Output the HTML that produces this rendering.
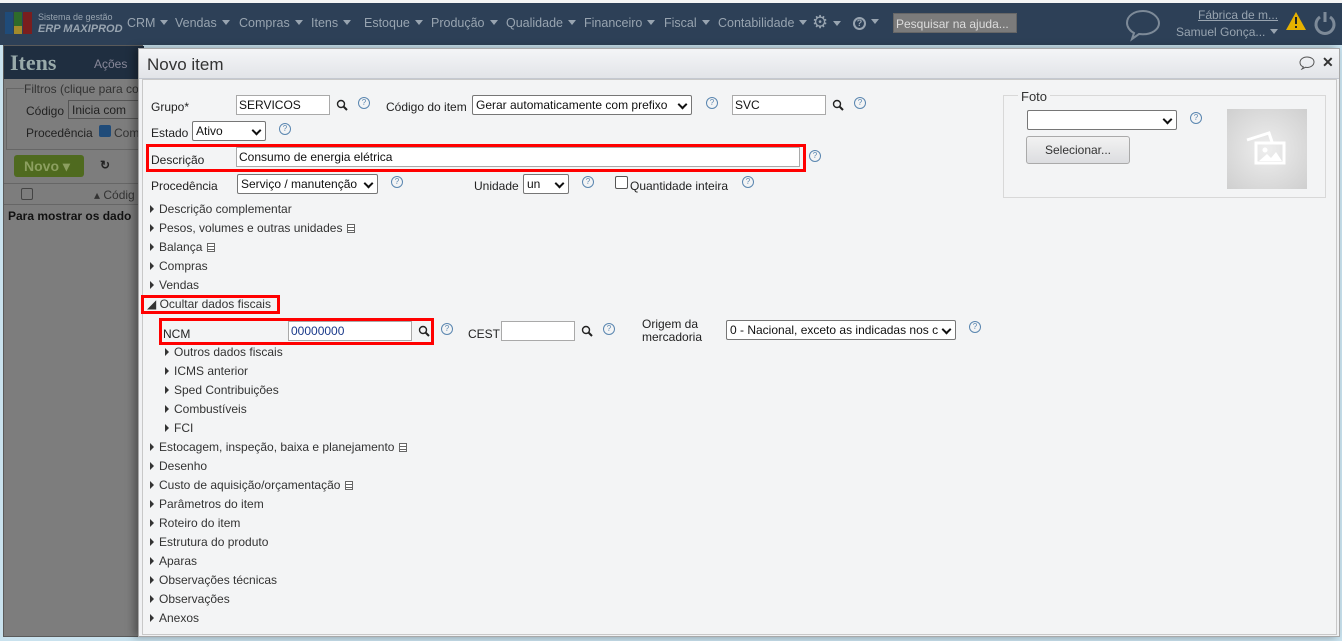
<!DOCTYPE html>
<html><head><meta charset="utf-8">
<style>
*{box-sizing:border-box;margin:0;padding:0}
body{width:1342px;height:641px;overflow:hidden;background:#c9e2ee;font-family:"Liberation Sans",sans-serif;font-size:12px;color:#222;position:relative}
.a{position:absolute;white-space:nowrap}
.nav{position:absolute;left:0;top:3px;width:1342px;height:42px;background:#2d4057}
.nav .m{color:#98a4b0;font-size:12.5px;top:13px}
.tri{display:inline-block;width:0;height:0;border-left:4px solid transparent;border-right:4px solid transparent;border-top:5px solid #98a4b0;margin-left:5px;vertical-align:2px}
.left{position:absolute;left:3px;top:45px;width:140px;height:592px;background:#7d7d7d;border:1px solid #5a5a5a}
.dlg{position:absolute;left:138px;top:48px;width:1202px;height:589px;background:#f0f1f3;border:1px solid #a8a8a8;box-shadow:-4px 0 8px rgba(0,0,0,.35)}
.hdr{position:absolute;left:0;top:0;width:100%;height:30px;background:linear-gradient(#f4f5f7,#e2e4e8);border-bottom:1px solid #c4c8d0}
.body{position:absolute;left:3px;top:30px;width:1195px;height:556px;border:1px solid #c8c8c8;background:#f3f4f5}
.lbl{font-size:12px;color:#222}
.inp{position:absolute;height:20px;background:#fff;border:1px solid #a9a9a9;font-size:12px;padding:2px 2px;color:#111}
.sel{position:absolute;height:20px;background:#fff;border:1px solid #767676;border-radius:2px;font-size:12px;padding:2px 3px;color:#111;overflow:hidden;white-space:nowrap}
.sel:after{content:"";position:absolute;right:5px;top:5px;width:5px;height:5px;border-right:2px solid #111;border-bottom:2px solid #111;transform:rotate(45deg)}
.q{position:absolute;width:12px;height:12px;border:1px solid #5a86b0;border-radius:50%;font-size:8px;color:#5a86b0;text-align:center;line-height:10px}
.red{position:absolute;border:3px solid #f00}
.row{position:absolute;left:7px;color:#333;font-size:12px}
.row:before{content:"";display:inline-block;width:0;height:0;border-top:4px solid transparent;border-bottom:4px solid transparent;border-left:4px solid #333;margin-right:5px;vertical-align:0}
.doc{display:inline-block;width:8px;height:9px;border:1px solid #666;margin-left:5px;vertical-align:-1px;background:linear-gradient(#fff 2px,#666 2px,#666 3px,#fff 3px,#fff 5px,#666 5px,#666 6px,#fff 6px)}
</style></head><body>
<div class="a" style="left:0;top:0;width:1342px;height:3px;background:#f4f4f4"></div>
<div class="nav">
 <div class="a" style="left:5px;top:9px;width:8px;height:22px;background:#1f4b79"></div>
 <div class="a" style="left:14px;top:9px;width:8px;height:14px;background:#2f6b2a"></div>
 <div class="a" style="left:14px;top:23px;width:8px;height:8px;background:#a38a2b"></div>
 <div class="a" style="left:23px;top:9px;width:9px;height:22px;background:#7a1e1e"></div>
 <div class="a" style="left:38px;top:9px;color:#98a4b0;font-size:9px">Sistema de gestão</div>
 <div class="a" style="left:38px;top:20px;color:#98a4b0;font-size:11px;font-weight:bold;font-style:italic">ERP MAXIPROD</div>
 <div class="a m" style="left:127px">CRM<span class="tri"></span></div>
 <div class="a m" style="left:175px">Vendas<span class="tri"></span></div>
 <div class="a m" style="left:239px">Compras<span class="tri"></span></div>
 <div class="a m" style="left:311px">Itens<span class="tri"></span></div>
 <div class="a m" style="left:364px">Estoque<span class="tri"></span></div>
 <div class="a m" style="left:431px">Produção<span class="tri"></span></div>
 <div class="a m" style="left:506px">Qualidade<span class="tri"></span></div>
 <div class="a m" style="left:584px">Financeiro<span class="tri"></span></div>
 <div class="a m" style="left:664px">Fiscal<span class="tri"></span></div>
 <div class="a m" style="left:718px">Contabilidade<span class="tri"></span></div>
 <div class="a m" style="left:812px;top:9px;font-size:18px">⚙<span class="tri"></span></div>
 <div class="a m" style="left:853px;top:12px"><span style="display:inline-block;width:13px;height:13px;border:2px solid #98a4b0;border-radius:50%;font-size:9px;text-align:center;line-height:9px;font-weight:bold">?</span><span class="tri"></span></div>
 <div class="a" style="left:893px;top:10px;width:124px;height:20px;background:#7b7b7b;border:1px solid #666;color:#ddd;font-size:12px;padding:3px 2px">Pesquisar na ajuda...</div>
 <svg class="a" style="left:1124px;top:5px" width="38" height="34" viewBox="0 0 38 34"><path d="M19 3C10 3 3 8 3 15c0 4 3 8 7 10l-2 6 7-5c1 0 3 .3 4 .3 9 0 16-5 16-11S28 3 19 3z" fill="none" stroke="#7d8a98" stroke-width="2"/></svg>
 <div class="a" style="left:1198px;top:5px;color:#98a4b0;font-size:12px;text-decoration:underline">Fábrica de m...</div>
 <div class="a" style="left:1176px;top:22px;color:#98a4b0;font-size:12px">Samuel Gonça...<span class="tri"></span></div>
 <svg class="a" style="left:1285px;top:8px" width="22" height="20"><path d="M11 1L21 19H1z" fill="#e6b100"/><rect x="10" y="6" width="2" height="7" fill="#222"/><rect x="10" y="15" width="2" height="2" fill="#222"/></svg>
 <svg class="a" style="left:1313px;top:7px" width="24" height="26"><path d="M7 7a9 9 0 1 0 10 0" fill="none" stroke="#7d8a98" stroke-width="3"/><line x1="12" y1="2" x2="12" y2="12" stroke="#7d8a98" stroke-width="3"/></svg>
</div>
<div class="left">
 <div class="a" style="left:0;top:0;width:140px;height:33px;background:#1f2e40"></div>
 <div class="a" style="left:6px;top:4px;font-size:22px;font-weight:bold;color:#9aa;font-family:'Liberation Serif',serif">Itens</div>
 <div class="a" style="left:90px;top:11px;color:#889;font-size:12px">Ações</div>
 <div class="a" style="left:2px;top:42px;width:136px;height:62px;border:1px solid #666"></div>
 <div class="a" style="left:20px;top:36px;color:#333;background:#7d7d7d;font-size:12px">Filtros (clique para co</div>
 <div class="a" style="left:22px;top:58px;color:#222">Código</div>
 <div class="a" style="left:64px;top:54px;width:80px;height:19px;border:1px solid #555;color:#222;padding:2px 3px">Inicia com</div>
 <div class="a" style="left:22px;top:80px;color:#222">Procedência</div>
 <div class="a" style="left:95px;top:79px;width:12px;height:12px;background:#1f4b79;border-radius:2px"></div>
 <div class="a" style="left:110px;top:80px;color:#333">Com</div>
 <div class="a" style="left:10px;top:109px;width:70px;height:22px;background:#4f6a1f;border-radius:3px;color:#8c9f60;font-weight:bold;font-size:14px;padding:3px 10px">Novo ▾</div>
 <div class="a" style="left:96px;top:112px;color:#222;font-weight:bold">↻</div>
 <div class="a" style="left:0;top:137px;width:140px;height:22px;border-top:1px solid #666;border-bottom:1px solid #666"></div>
 <div class="a" style="left:17px;top:142px;width:12px;height:12px;border:1px solid #444;border-radius:2px"></div>
 <div class="a" style="left:90px;top:142px;color:#333">▴ Códig</div>
 <div class="a" style="left:4px;top:163px;color:#111;font-weight:bold">Para mostrar os dado</div>
</div>
<div class="dlg">
 <div class="hdr">
  <div class="a" style="left:8px;top:6px;font-size:17px;color:#333">Novo item</div>
  <svg class="a" style="left:1160px;top:7px" width="16" height="14"><path d="M8 1C4 1 1 3.5 1 6.5c0 2 1.4 3.6 3.4 4.5L3 13l3.5-1.7c.5.1 1 .2 1.5.2 4 0 7-2.5 7-5.5S12 1 8 1z" fill="none" stroke="#555" stroke-width="1"/></svg>
  <div class="a" style="left:1183px;top:5px;font-size:14px;font-weight:bold;color:#333">✕</div>
 </div>
 <div class="body">
  <div class="a lbl" style="left:8px;top:20px">Grupo*</div>
  <div class="inp" style="left:93px;top:15px;width:94px">SERVICOS</div>
  <svg class="a" style="left:193px;top:19px" width="12" height="12"><circle cx="5" cy="5" r="3.5" fill="none" stroke="#222" stroke-width="1.4"/><line x1="7.5" y1="7.5" x2="11" y2="11" stroke="#222" stroke-width="2"/></svg>
  <div class="q" style="left:215px;top:17px">?</div>
  <div class="a lbl" style="left:243px;top:20px">Código do item</div>
  <div class="sel" style="left:329px;top:15px;width:220px">Gerar automaticamente com prefixo</div>
  <div class="q" style="left:563px;top:17px">?</div>
  <div class="inp" style="left:589px;top:15px;width:94px">SVC</div>
  <svg class="a" style="left:689px;top:19px" width="12" height="12"><circle cx="5" cy="5" r="3.5" fill="none" stroke="#222" stroke-width="1.4"/><line x1="7.5" y1="7.5" x2="11" y2="11" stroke="#222" stroke-width="2"/></svg>
  <div class="q" style="left:711px;top:17px">?</div>
  <div class="a lbl" style="left:8px;top:46px">Estado</div>
  <div class="sel" style="left:49px;top:41px;width:74px">Ativo</div>
  <div class="q" style="left:136px;top:43px">?</div>
  <div class="red" style="left:3px;top:64px;width:660px;height:28px"></div>
  <div class="a lbl" style="left:8px;top:73px">Descrição</div>
  <div class="inp" style="left:93px;top:67px;width:564px">Consumo de energia elétrica</div>
  <div class="q" style="left:666px;top:70px">?</div>
  <div class="a lbl" style="left:8px;top:99px">Procedência</div>
  <div class="sel" style="left:94px;top:94px;width:141px">Serviço / manutenção</div>
  <div class="q" style="left:248px;top:96px">?</div>
  <div class="a lbl" style="left:331px;top:99px">Unidade</div>
  <div class="sel" style="left:380px;top:94px;width:46px">un</div>
  <div class="q" style="left:439px;top:96px">?</div>
  <div class="a" style="left:472px;top:96px;width:13px;height:13px;border:1px solid #555;border-radius:2px;background:#fff"></div>
  <div class="a lbl" style="left:487px;top:99px">Quantidade inteira</div>
  <div class="q" style="left:599px;top:96px">?</div>
  <div class="a" style="left:860px;top:15px;width:323px;height:103px;border:1px solid #d8d8d8"></div>
  <div class="a" style="left:875px;top:9px;background:#f3f4f5;padding:0 3px;font-size:13px;color:#333">Foto</div>
  <div class="sel" style="left:884px;top:30px;width:150px"></div>
  <div class="q" style="left:1047px;top:32px">?</div>
  <div class="a" style="left:883px;top:56px;width:104px;height:28px;background:linear-gradient(#f2f2f2,#dcdde0);border:1px solid #aaa;border-radius:3px;text-align:center;line-height:26px;color:#333">Selecionar...</div>
  <div class="a" style="left:1084px;top:29px;width:80px;height:80px;background:radial-gradient(#eeeeee,#cfcfcf)"></div>
  <svg class="a" style="left:1101px;top:50px" width="44" height="36"><path d="M3 10L25 3 28 12" fill="none" stroke="#fff" stroke-width="3"/><rect x="12" y="13" width="28" height="20" fill="none" stroke="#fff" stroke-width="3"/><circle cx="21" cy="20" r="2.5" fill="#fff"/><path d="M15 31l8-7 4 4 5-6 6 9z" fill="#fff"/></svg>
  <div class="row" style="top:122px">Descrição complementar</div>
  <div class="row" style="top:141px">Pesos, volumes e outras unidades<span class="doc"></span></div>
  <div class="row" style="top:160px">Balança<span class="doc"></span></div>
  <div class="row" style="top:179px">Compras</div>
  <div class="row" style="top:198px">Vendas</div>
  <div class="red" style="left:-2px;top:215px;width:139px;height:19px"></div>
  <div class="a" style="left:4px;top:217px;color:#333">◢ Ocultar dados fiscais</div>
  <div class="red" style="left:16px;top:238px;width:275px;height:27px"></div>
  <div class="a lbl" style="left:20px;top:247px">NCM</div>
  <div class="inp" style="left:145px;top:241px;width:124px;color:#1a3a8a">00000000</div>
  <svg class="a" style="left:275px;top:245px" width="12" height="12"><circle cx="5" cy="5" r="3.5" fill="none" stroke="#222" stroke-width="1.4"/><line x1="7.5" y1="7.5" x2="11" y2="11" stroke="#222" stroke-width="2"/></svg>
  <div class="q" style="left:298px;top:243px">?</div>
  <div class="a lbl" style="left:325px;top:247px">CEST</div>
  <div class="inp" style="left:358px;top:241px;width:74px"></div>
  <svg class="a" style="left:438px;top:245px" width="12" height="12"><circle cx="5" cy="5" r="3.5" fill="none" stroke="#222" stroke-width="1.4"/><line x1="7.5" y1="7.5" x2="11" y2="11" stroke="#222" stroke-width="2"/></svg>
  <div class="q" style="left:460px;top:243px">?</div>
  <div class="a lbl" style="left:499px;top:238px;line-height:13px">Origem da<br>mercadoria</div>
  <div class="sel" style="left:583px;top:240px;width:230px">0 - Nacional, exceto as indicadas nos c</div>
  <div class="q" style="left:826px;top:241px">?</div>
  <div class="row" style="top:265px;left:22px">Outros dados fiscais</div>
  <div class="row" style="top:284px;left:22px">ICMS anterior</div>
  <div class="row" style="top:303px;left:22px">Sped Contribuições</div>
  <div class="row" style="top:322px;left:22px">Combustíveis</div>
  <div class="row" style="top:341px;left:22px">FCI</div>
  <div class="row" style="top:360px">Estocagem, inspeção, baixa e planejamento<span class="doc"></span></div>
  <div class="row" style="top:379px">Desenho</div>
  <div class="row" style="top:398px">Custo de aquisição/orçamentação<span class="doc"></span></div>
  <div class="row" style="top:417px">Parâmetros do item</div>
  <div class="row" style="top:436px">Roteiro do item</div>
  <div class="row" style="top:455px">Estrutura do produto</div>
  <div class="row" style="top:474px">Aparas</div>
  <div class="row" style="top:493px">Observações técnicas</div>
  <div class="row" style="top:512px">Observações</div>
  <div class="row" style="top:531px">Anexos</div>
 </div>
</div>
</body></html>
